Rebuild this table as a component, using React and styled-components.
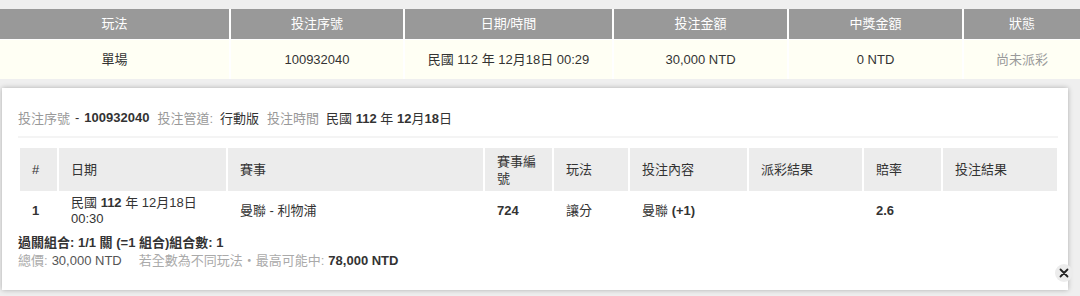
import React from 'react';
import styled, { createGlobalStyle } from 'styled-components';

const GlobalStyle = createGlobalStyle`
  html, body {
    margin: 0;
    padding: 0;
    background: #efefef;
    font-family: "Liberation Sans", Arial, "Noto Sans CJK TC", sans-serif;
    font-size: 13px;
    color: #333;
  }
`;

const Page = styled.div`
  width: 1080px;
  height: 296px;
  padding-top: 9px;
  box-sizing: border-box;
  overflow: hidden;
`;

const Summary = styled.div`
  display: grid;
  grid-template-columns: 229px 172px 207px 173px 173px 1fr;
  column-gap: 2px;
  row-gap: 1px;
  background: #fff;
`;

const HeadCell = styled.div`
  height: 30px;
  line-height: 30px;
  background: #999;
  color: #fff;
  text-align: center;
`;

const DataCell = styled.div`
  height: 39px;
  line-height: 39px;
  background: #fffff4;
  color: ${p => (p.$muted ? '#999' : '#333')};
  text-align: center;
`;

const Panel = styled.div`
  position: relative;
  margin: 9px 12px 0 2px;
  height: 202px;
  background: #fff;
  box-shadow: 0 0 5px rgba(0, 0, 0, 0.28);
  padding: 20px 0 0 16px;
  box-sizing: border-box;
`;

const InfoLine = styled.div`
  display: flex;
  align-items: center;
  height: 18px;
  padding-bottom: 10px;
  margin-right: 10px;
  border-bottom: 2px solid #f4f4f4;
`;

const Label = styled.span`
  color: #999;
  margin-right: ${p => p.$gap || 7}px;
`;

const Value = styled.span`
  color: #333;
  font-weight: ${p => (p.$bold ? 700 : 400)};
  margin-right: ${p => p.$gap || 8}px;
`;

const Bets = styled.table`
  table-layout: fixed;
  border-collapse: separate;
  border-spacing: 2px 0;
  margin-top: 10px;
  width: 1041px;
  th {
    background: #ececec;
    height: 43px;
    padding: 0 12px;
    text-align: left;
    font-weight: 400;
    line-height: 17px;
    color: #333;
  }
  td {
    height: 40px;
    padding: 0 12px;
    line-height: 16px;
    vertical-align: middle;
    color: #333;
  }
`;

const Num = styled.b`
  font-weight: 700;
`;

const Totals = styled.div`
  margin-top: 3px;
  line-height: 18px;
`;

const ComboLine = styled.div`
  font-weight: 700;
  color: #333;
`;

const PriceLine = styled.div`
  color: #aaa;
  span {
    color: #555;
    margin: 0 17px 0 4px;
  }
  b {
    color: #333;
    margin-left: 4px;
  }
`;

const CloseButton = styled.button`
  position: absolute;
  right: -5px;
  bottom: 8px;
  width: 18px;
  height: 18px;
  border: none;
  border-radius: 50%;
  background: #ececec;
  padding: 0;
  display: flex;
  align-items: center;
  justify-content: center;
  cursor: pointer;
`;

const heads = ['玩法', '投注序號', '日期/時間', '投注金額', '中獎金額', '狀態'];

const cols = [37, 167, 255, 67, 74, 117, 113, 77, 114];

export default function App() {
  return (
    <>
      <GlobalStyle />
      <Page lang="zh-TW">
        <Summary>
          {heads.map(h => (
            <HeadCell key={h}>{h}</HeadCell>
          ))}
          <DataCell>單場</DataCell>
          <DataCell>100932040</DataCell>
          <DataCell>民國 112 年 12月18日 00:29</DataCell>
          <DataCell>30,000 NTD</DataCell>
          <DataCell>0 NTD</DataCell>
          <DataCell $muted>尚未派彩</DataCell>
        </Summary>

        <Panel>
          <InfoLine>
            <Label $gap={5}>投注序號</Label>
            <Value $gap={5}>-</Value>
            <Value $bold>100932040</Value>
            <Label>投注管道:</Label>
            <Value>行動版</Value>
            <Label>投注時間</Label>
            <Value>
              民國 <Num>112</Num> 年 <Num>12</Num>月<Num>18</Num>日
            </Value>
          </InfoLine>

          <Bets>
            <colgroup>
              {cols.map((w, i) => (
                <col key={i} style={{ width: w }} />
              ))}
            </colgroup>
            <thead>
              <tr>
                <th>#</th>
                <th>日期</th>
                <th>賽事</th>
                <th>賽事編號</th>
                <th>玩法</th>
                <th>投注內容</th>
                <th>派彩結果</th>
                <th>賠率</th>
                <th>投注結果</th>
              </tr>
            </thead>
            <tbody>
              <tr>
                <td><Num>1</Num></td>
                <td>
                  民國 <Num>112</Num> 年 12月18日
                  <br />
                  00:30
                </td>
                <td>曼聯 - 利物浦</td>
                <td><Num>724</Num></td>
                <td>讓分</td>
                <td>曼聯 <Num>(+1)</Num></td>
                <td></td>
                <td><Num>2.6</Num></td>
                <td></td>
              </tr>
            </tbody>
          </Bets>

          <Totals>
            <ComboLine>過關組合: 1/1 關 (=1 組合)組合數: 1</ComboLine>
            <PriceLine>
              總價:<span>30,000 NTD</span>若全數為不同玩法・最高可能中:<b>78,000 NTD</b>
            </PriceLine>
          </Totals>

          <CloseButton aria-label="close">
            <svg width="10" height="10" viewBox="0 0 10 10">
              <path d="M1.5 1.5 L8.5 8.5 M8.5 1.5 L1.5 8.5" stroke="#222" strokeWidth="1.8" strokeLinecap="round" />
            </svg>
          </CloseButton>
        </Panel>
      </Page>
    </>
  );
}
